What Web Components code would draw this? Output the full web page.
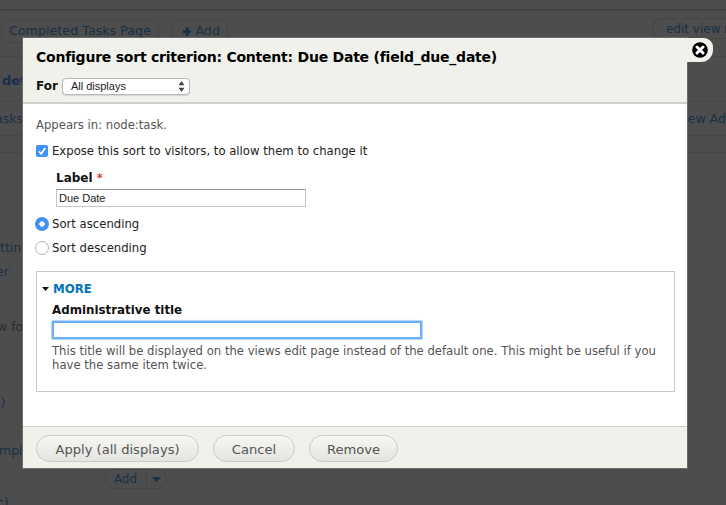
<!DOCTYPE html>
<html><head><meta charset="utf-8"><style>
html,body{margin:0;padding:0;background:#4d4d4d;height:505px;overflow:hidden}
body{font-family:"DejaVu Sans",sans-serif}
</style></head><body>
<views-backdrop></views-backdrop>
<sort-dialog title-text="Configure sort criterion: Content: Due Date (field_due_date)">
  <for-select slot="head"></for-select>
  <p>Appears in: node:task.</p>
  <check-row>Expose this sort to visitors, to allow them to change it</check-row>
  <label-field></label-field>
  <radio-row checked>Sort ascending</radio-row>
  <radio-row>Sort descending</radio-row>
  <more-fieldset></more-fieldset>
  <pill-button slot="foot" style="--w:163px">Apply (all displays)</pill-button>
  <pill-button slot="foot" style="--w:82px">Cancel</pill-button>
  <pill-button slot="foot" style="--w:89px">Remove</pill-button>
</sort-dialog>
<script>
function def(name, html, init){
  customElements.define(name, class extends HTMLElement{
    constructor(){super();this.attachShadow({mode:'open'}).innerHTML=html;}
    connectedCallback(){ if(init) init(this); }
  });
}
def('views-backdrop',`<style>
:host{display:block;height:505px;overflow:hidden;color:#1a3045;font-size:12px}
.sec{display:flex;box-sizing:border-box;border-bottom:1px solid #464646;align-items:center;white-space:nowrap}
.top{height:11px;border-bottom:2px solid #424242}
.tabs{height:46px;justify-content:space-between;padding:8px 0 0 1px;align-items:flex-start}
.tabs div{display:flex;gap:12px}
.tb{border:1px solid #454545;border-radius:10px;box-sizing:border-box;height:24px;line-height:22px;padding:0 7px;font-size:12.7px;display:flex;align-items:center;gap:4px}
.add0{width:57px;padding-left:11px}
.ev{border-radius:12px 0 0 12px;border-right:0;padding:0 0 0 13px;margin-top:-1px;width:74px;font-size:12px;height:21px}
.h{height:45px;font-weight:bold;font-size:13px;padding:3px 0 0 2px;color:#173049}
.row{justify-content:space-between;height:34px;font-size:12.5px;padding-bottom:1px}
.row span:first-child{margin-left:-5px}
.blank{height:17px}
.l{white-space:nowrap;line-height:18px;height:18px;font-size:12.5px}
.sm{color:#2a2a2a}
.add{display:flex;margin:9px 0 0 104px;width:63px;height:20px;border:1px solid #454545;border-radius:10px;box-sizing:border-box;font-size:12px;align-items:center;color:#173049}
.add b{font-weight:normal;flex:1;text-align:center;border-right:1px solid #444;line-height:14px}
.add i{width:19px;display:flex;justify-content:center}
</style>
<div class="sec top"></div>
<div class="sec tabs"><div><span class="tb">Completed Tasks Page</span><span class="tb add0"><svg width="9" height="9" viewBox="0 0 9 9"><path d="M3 0h3v3h3v3H6v3H3V6H0V3h3z" fill="#173049"/></svg>Add</span></div><span class="tb ev">edit view n</span></div>
<div class="sec h">det</div>
<div class="sec row"><span>asks</span><span>iew Ad</span></div>
<div class="sec blank"></div>
<div class="l" style="margin-top:86px">ttin</div>
<div class="l" style="margin:6px 0 0 -4px">er</div>
<div class="l sm" style="margin:37px 0 0 -3px">w fo</div>
<div class="l" style="margin:58px 0 0 -6px">s)</div>
<div class="l" style="margin:30px 0 0 -1px">mpl</div>
<div class="add"><b>Add</b><i><svg width="9" height="5"><path d="M0 0h9L4.5 5z" fill="#173049"/></svg></i></div>
<div class="l" style="margin:5px 0 0 -3px">c)</div>`);

def('sort-dialog',`<style>
:host{position:absolute;left:23px;top:38px;width:664px;height:430px;display:flex;flex-direction:column;background:#fff;box-shadow:0 0 0 1px #6a6a6a;color:#222;font-size:12px}
header{box-sizing:border-box;height:66px;background:#f1f1ec;border-bottom:2px solid #cfcfcb;padding:10px 13px 0;flex:none}
h1{margin:0;font-size:14px;letter-spacing:-.23px;font-weight:bold;line-height:19px;color:#000}
main{flex:1;padding:0 12px 0 13px}
footer{box-sizing:border-box;height:42px;background:#f1f1ec;border-top:1px solid #cfcfcb;display:flex;gap:14px;padding:8px 13px 0;flex:none}
.x{position:absolute;right:-26px;top:0;width:26px;height:24px;background:#f1f1ec;border-radius:0 9px 12px 0;display:flex;align-items:center}
::slotted(p){margin:13px 0 0;font-size:11.65px;line-height:16px;color:#555}
</style>
<header><h1></h1><slot name="head"></slot></header>
<main><slot></slot></main>
<footer><slot name="foot"></slot></footer>
<div class="x" aria-label="close"><svg width="16" height="16" viewBox="0 0 16 16" style="margin-left:5px"><circle cx="8" cy="8" r="7.8" fill="#000"/><path d="M5 5l6 6M11 5l-6 6" stroke="#fff" stroke-width="3" stroke-linecap="round"/></svg></div>`,
el=>{el.shadowRoot.querySelector('h1').textContent=el.getAttribute('title-text');});

def('for-select',`<style>
:host{display:flex;align-items:center;gap:4px;margin-top:10px;height:18px}
b{font-size:12px;color:#111}
.s{box-sizing:border-box;width:128px;height:17px;border:1px solid #b9b9b9;border-radius:4px;background:#fff;font:11px "Liberation Sans",sans-serif;color:#222;display:flex;align-items:center;justify-content:space-between;padding:0 4px 0 8px;box-shadow:0 1px 1px #d5d5d5}
</style><b>For</b><div class="s"><span>All displays</span><svg width="7" height="11" viewBox="0 0 7 11"><path d="M3.5 0L6.5 4.2H.5zM3.5 11L.5 6.8h6z" fill="#444"/></svg></div>`);

def('check-row',`<style>
:host{display:flex;align-items:center;gap:4px;margin-top:9px;height:18px;font-size:11.66px;color:#222;white-space:nowrap}
i{width:12px;height:12px;border-radius:2px;background:#3f93f5;display:flex;align-items:center;justify-content:center}
</style><i><svg width="10" height="10" viewBox="0 0 10 10"><path d="M2 5.2l2.2 2.6L8.2 2" fill="none" stroke="#fff" stroke-width="1.7"/></svg></i><slot></slot>`);

def('label-field',`<style>
:host{display:block;margin:10px 0 5px 20px}
b{display:block;font-size:12px;line-height:16px;color:#111}
b span{color:#e00;font-weight:normal}
.i{box-sizing:border-box;width:250px;height:18px;margin-top:3px;border:1px solid #c4c4c4;border-top-color:#999;padding-left:2px;font:11px/16px "Liberation Sans",sans-serif;color:#222}
</style><b>Label <span>*</span></b><div class="i">Due Date</div>`);

def('radio-row',`<style>
:host{display:flex;align-items:center;gap:3px;height:24px;font-size:11.66px;color:#222;margin-left:-1px;white-space:nowrap}
i{box-sizing:border-box;width:14px;height:14px;border-radius:50%;border:1px solid #b5b5b5;background:#fff;display:block}
:host([checked]) i{border:0;background:radial-gradient(circle,#fff 0 2.4px,#3f93f5 3px)}
</style><i></i><slot></slot>`);

def('more-fieldset',`<style>
:host{display:block;box-sizing:border-box;margin-top:11px;height:121px;border:1px solid #c9c9c9;padding:8px 15px 0}
.m{display:flex;align-items:center;gap:4px;margin-left:-10px;height:17px;color:#0074bd;font-weight:bold;font-size:11.8px}
b{display:block;margin-top:5px;font-size:11.85px;line-height:16px;color:#111}
.i{box-sizing:border-box;width:370px;height:18px;margin-top:3px;border:2px solid #6aaef5;box-shadow:0 0 1px 1px #b0d4fa;border-radius:1px;background:#fff}
p{margin:5px 0 0;font-size:11.65px;line-height:14px;color:#555;width:615px}
</style><div class="m"><svg width="7" height="4"><path d="M0 0h7L3.5 4z" fill="#111"/></svg>MORE</div><b>Administrative title</b><div class="i"></div><p>This title will be displayed on the views edit page instead of the default one. This might be useful if you have the same item twice.</p>`);

def('pill-button',`<style>
:host{display:flex;box-sizing:border-box;width:var(--w);height:27px;padding-top:2px;justify-content:center;align-items:center;border:1px solid #c9c9c5;border-radius:14px;background:linear-gradient(#f6f6f3,#e4e4e1);font-size:13.1px;color:#555;white-space:nowrap}
</style><slot></slot>`);
</script>
</body></html>
